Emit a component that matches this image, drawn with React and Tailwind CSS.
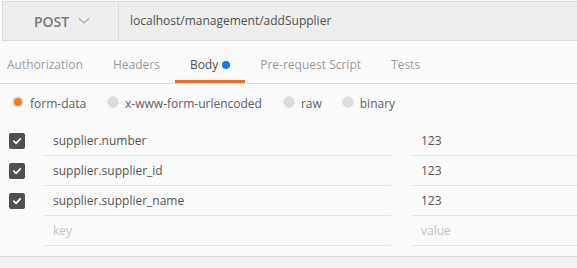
import React from "react";

function Radio({ checked, label }) {
  return (
    <div className="flex items-center gap-[6px]">
      {checked ? (
        <span className="w-[12px] h-[12px] rounded-full bg-[#f47a2e] border-[2px] border-[#e2e2e2] -mt-[3px]" />
      ) : (
        <span className="w-[12px] h-[12px] rounded-full bg-[#dcdcdc] border border-[#e4e4e4] -mt-[3px]" />
      )}
      <span className="text-[12px] text-[#606060]">{label}</span>
    </div>
  );
}

function Check() {
  return (
    <span className="w-[16px] h-[16px] rounded-[2px] bg-[#4f4f4f] flex items-center justify-center">
      <svg width="10" height="10" viewBox="0 0 10 10">
        <path d="M1.8 5.2 L4 7.3 L8.3 2.8" fill="none" stroke="#fff" strokeWidth="1.8" strokeLinecap="round" strokeLinejoin="round" />
      </svg>
    </span>
  );
}

function Row({ k, v, placeholder }) {
  return (
    <div className="flex h-[30px]">
      <div className="w-[43px] pl-[9px] flex items-center">{!placeholder && <Check />}</div>
      <div className={`w-[348px] border-b border-[#e6e6e6] pl-[10px] pt-[1px] flex items-center text-[12px] ${placeholder ? "text-[#c2c2c2]" : "text-[#555555]"}`}>{k}</div>
      <div className="w-[20px]" />
      <div className={`flex-1 border-b border-[#e6e6e6] pl-[10px] pt-[1px] flex items-center text-[12px] ${placeholder ? "text-[#c2c2c2]" : "text-[#555555]"}`}>{v}</div>
    </div>
  );
}

export default function App() {
  return (
    <div className="w-[577px] h-[268px] bg-[#fafafa] overflow-hidden flex flex-col" style={{ fontFamily: '"Open Sans", sans-serif' }}>
      <div className="mt-[1px] ml-[2px] h-[40px] border border-r-0 border-[#dcdcdc] bg-[#eeeeee] flex shrink-0">
        <div className="w-[116px] border-r border-[#dcdcdc] flex items-center justify-center gap-[9px] pl-[3px]">
          <span className="text-[14px] text-[#7a7a7a] font-semibold">POST</span>
          <svg width="12" height="8" viewBox="0 0 12 8">
            <path d="M1 1.5 L6 6 L11 1.5" fill="none" stroke="#a8a8a8" strokeWidth="1.3" />
          </svg>
        </div>
        <div className="flex items-center pl-[11px] text-[12px] text-[#505050]">localhost/management/addSupplier</div>
      </div>
      <div className="h-[43px] border-b border-[#dcdcdc] flex pl-[7px] gap-[30px] shrink-0 text-[12px]">
        <div className="flex items-center pt-[5px] text-[#9a9a9a]">Authorization</div>
        <div className="flex items-center pt-[5px] text-[#9a9a9a]">Headers</div>
        <div className="flex items-center pt-[5px] -mx-[15px] px-[15px] border-b-[3px] border-[#f26b26] text-[#505050] gap-[4px]">
          <span className="mt-[3px]">Body</span>
          <span className="w-[8px] h-[8px] rounded-full bg-[#0d7bea] mt-[3px]" />
        </div>
        <div className="flex items-center pt-[5px] text-[#9a9a9a]">Pre-request Script</div>
        <div className="flex items-center pt-[5px] text-[#9a9a9a]">Tests</div>
      </div>
      <div className="h-[42px] flex items-center pl-[12px] pb-[3px] shrink-0">
        <div className="flex items-center">
          <Radio checked label="form-data" />
          <div className="w-[21px]" />
          <Radio label="x-www-form-urlencoded" />
          <div className="w-[21px]" />
          <Radio label="raw" />
          <div className="w-[20px]" />
          <Radio label="binary" />
        </div>
      </div>
      <Row k="supplier.number" v="123" />
      <Row k="supplier.supplier_id" v="123" />
      <Row k="supplier.supplier_name" v="123" />
      <Row k="key" v="value" placeholder />
      <div className="mt-[10px] border-t border-[#dcdcdc] bg-[#f2f2f2] flex-1" />
    </div>
  );
}
